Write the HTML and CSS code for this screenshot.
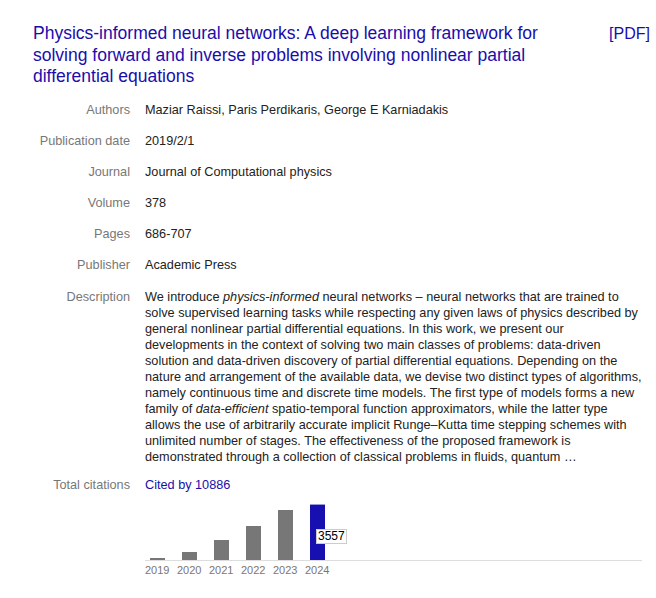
FILE: index.html
```html
<!DOCTYPE html>
<html>
<head>
<meta charset="utf-8">
<link rel="stylesheet" href="styles.css">
</head>
<body>
<div class="page">
  <div class="head">
    <a class="title" href="#">Physics-informed neural networks: A deep learning framework for solving forward and inverse problems involving nonlinear partial differential equations</a>
    <a class="pdf" href="#">[PDF]</a>
  </div>
  <div class="table">
    <div class="row"><div class="label">Authors</div><div class="value">Maziar Raissi, Paris Perdikaris, George E Karniadakis</div></div>
    <div class="row"><div class="label">Publication date</div><div class="value">2019/2/1</div></div>
    <div class="row"><div class="label">Journal</div><div class="value">Journal of Computational physics</div></div>
    <div class="row"><div class="label">Volume</div><div class="value">378</div></div>
    <div class="row"><div class="label">Pages</div><div class="value">686-707</div></div>
    <div class="row"><div class="label">Publisher</div><div class="value">Academic Press</div></div>
    <div class="row desc-row"><div class="label">Description</div><div class="value desc">We introduce <i>physics-informed</i> neural networks – neural networks that are trained to<br>solve supervised learning tasks while respecting any given laws of physics described by<br>general nonlinear partial differential equations. In this work, we present our<br>developments in the context of solving two main classes of problems: data-driven<br>solution and data-driven discovery of partial differential equations. Depending on the<br>nature and arrangement of the available data, we devise two distinct types of algorithms,<br>namely continuous time and discrete time models. The first type of models forms a new<br>family of <i>data-efficient</i> spatio-temporal function approximators, while the latter type<br>allows the use of arbitrarily accurate implicit Runge–Kutta time stepping schemes with<br>unlimited number of stages. The effectiveness of the proposed framework is<br>demonstrated through a collection of classical problems in fluids, quantum …</div></div>
    <div class="row"><div class="label">Total citations</div><div class="value">
      <a class="cited" href="#">Cited by 10886</a>
      <div class="chart">
        <div class="bars">
          <div class="col"><div class="bar" style="height:2px"></div></div>
          <div class="col"><div class="bar" style="height:8px"></div></div>
          <div class="col"><div class="bar" style="height:20px"></div></div>
          <div class="col"><div class="bar" style="height:34px"></div></div>
          <div class="col"><div class="bar" style="height:50px"></div></div>
          <div class="col"><div class="bar hi" style="height:55px"><span class="tip">3557</span></div></div>
        </div>
        <div class="years">
          <span>2019</span><span>2020</span><span>2021</span><span>2022</span><span>2023</span><span>2024</span>
        </div>
      </div>
    </div></div>
  </div>
</div>
</body>
</html>
```
FILE: styles.css
```css
html, body {
  margin: 0;
  padding: 0;
  background: #fff;
}
body {
  font-family: "Liberation Sans", Arial, sans-serif;
  color: #222;
}
.page {
  width: 617px;
  padding: 23px 0 0 33px;
}
.head {
  display: flex;
  justify-content: space-between;
  align-items: flex-start;
}
.title {
  width: 545px;
  font-size: 17.5px;
  line-height: 21.5px;
  color: #1a0dab;
  text-decoration: none;
}
.pdf {
  font-size: 16px;
  line-height: 21.5px;
  color: #1a0dab;
  text-decoration: none;
}
.table {
  margin-top: 14px;
  font-size: 12.7px;
  line-height: 16px;
}
.row {
  display: flex;
  padding-bottom: 15.2px;
}
.row.desc-row {
  padding-bottom: 12px;
}
.label {
  width: 97px;
  flex: none;
  text-align: right;
  color: #777;
  padding-right: 15px;
}
.value {
  flex: 1;
  color: #222;
}
.desc {
  white-space: nowrap;
}
.cited {
  color: #1a0dab;
  text-decoration: none;
}
.chart {
  margin-top: 7px;
  width: 497px;
}
.bars {
  display: flex;
  align-items: flex-end;
  height: 60px;
  padding-left: 5px;
  gap: 17px;
  border-bottom: 1px solid #ddd;
}
.col {
  width: 15px;
  display: flex;
  align-items: flex-end;
  height: 100%;
}
.bar {
  width: 15px;
  background: #777;
  position: relative;
}
.bar.hi {
  background: #180fb0;
  border-top: 1px solid #9a9ae0;
}
.tip {
  position: absolute;
  left: 6px;
  top: 24px;
  background: #fff;
  border: 1px solid #ccc;
  color: #000;
  font-size: 12px;
  line-height: 13px;
  padding: 0 1px;
}
.years {
  display: flex;
  gap: 8px;
  font-size: 11px;
  line-height: 16px;
  color: #777;
  padding-top: 1px;
}
.years span {
  width: 24px;
  text-align: center;
}
```
